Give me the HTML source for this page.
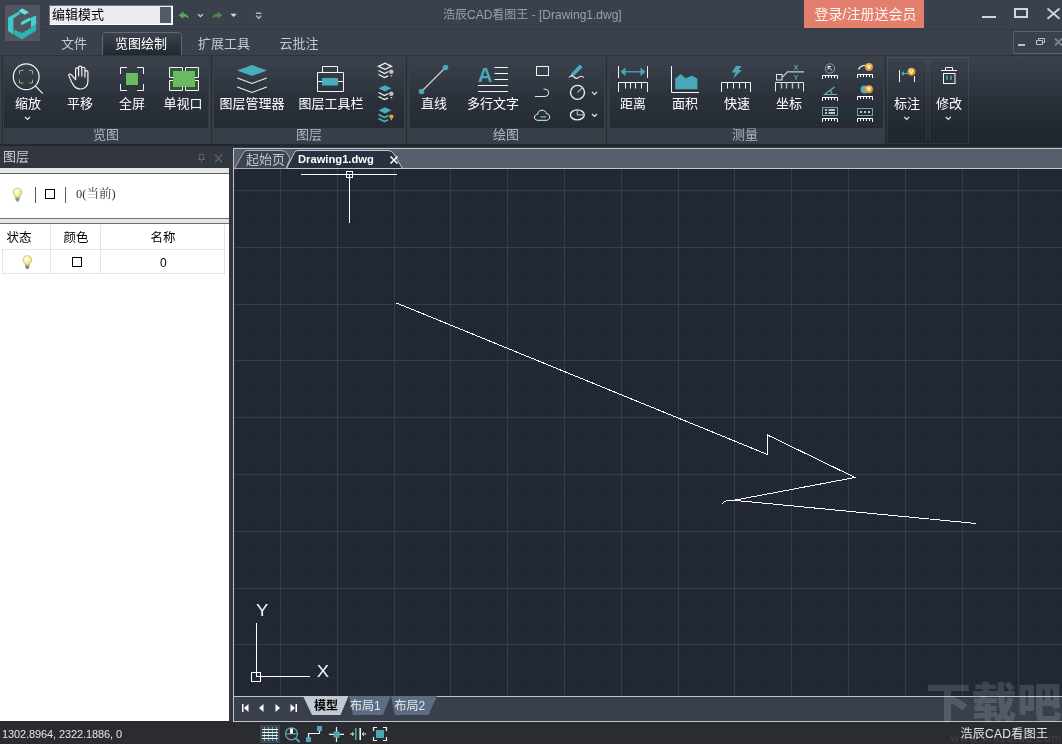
<!DOCTYPE html>
<html lang="zh-CN">
<head>
<meta charset="utf-8">
<title>浩辰CAD看图王 - [Drawing1.dwg]</title>
<style>
html,body{margin:0;padding:0;}
body{width:1062px;height:744px;overflow:hidden;position:relative;background:#3b414c;
 font-family:"Liberation Sans","Noto Sans CJK SC",sans-serif;font-size:13px;color:#fff;}
.a{position:absolute;}
.t{position:absolute;white-space:nowrap;line-height:1;}
svg{position:absolute;overflow:visible;}
.ic{left:0;top:0;width:1062px;height:744px;pointer-events:none;}
/* ribbon */
.grp{position:absolute;top:58px;height:70px;background:linear-gradient(#3c424d 0,#343b45 25%,#2b323b 55%,#242b33 100%);}
.grp2{position:absolute;top:57px;height:87px;box-sizing:border-box;border:1px solid rgba(255,255,255,0.075);}
.sep{position:absolute;top:57px;width:1px;height:87px;background:#262b32;}
.lab{position:absolute;top:128px;height:15px;line-height:14px;font-size:13px;color:#b0b6c0;text-align:center;}
.bl{position:absolute;top:97px;white-space:nowrap;line-height:1;font-size:13px;color:#fff;transform:translateX(-50%);}
.th{position:absolute;top:231.500px;font-size:12.500px;line-height:1;color:#000;transform:translateX(-50%);white-space:nowrap;}
</style>
</head>
<body>
<div id="root" style="position:absolute;left:0;top:0;width:1062px;height:744px;will-change:transform;">

<!-- ===== title bar ===== -->
<div class="a" style="left:0;top:29px;width:1062px;height:1px;background:#353b45;"></div>
<div class="a" style="left:5px;top:5px;width:35px;height:36px;background:#4f5660;"></div>
<div class="a" style="left:49px;top:5px;width:124px;height:20px;background:#ebebf1;box-shadow:inset 1px 1px 0 #70757f, inset -1px -1px 0 #fff;"></div>
<div class="a" style="left:160px;top:7px;width:11px;height:16px;background:#525a6a;"></div>
<div class="t" style="left:52px;top:8px;font-size:13px;color:#000;">编辑模式</div>
<div class="t" style="left:443px;top:9px;font-size:12px;color:#9aa0aa;">浩辰CAD看图王 - [Drawing1.dwg]</div>
<div class="a" style="left:804px;top:0;width:120px;height:28px;background:#e3806d;"></div>
<div class="t" style="left:814.500px;top:7px;font-size:14px;color:#fff4f0;">登录/注册送会员</div>
<div class="a" style="left:1013px;top:31px;width:52px;height:23px;border:1px solid #59606c;border-radius:2px;box-sizing:border-box;"></div>

<!-- ===== menu tabs ===== -->
<div class="a" style="left:103px;top:33px;width:78px;height:23px;border-radius:4px 4px 0 0;background:linear-gradient(#3b424d,#20272f);box-shadow:0 0 0 1px #626975;"></div>
<div class="t" style="left:61px;top:37px;font-size:13px;color:#c6cad2;">文件</div>
<div class="t" style="left:115px;top:37px;font-size:13px;color:#fff;">览图绘制</div>
<div class="t" style="left:198px;top:37px;font-size:13px;color:#c6cad2;">扩展工具</div>
<div class="t" style="left:279.500px;top:37px;font-size:13px;color:#c6cad2;">云批注</div>

<!-- ===== ribbon ===== -->
<div class="a" style="left:0;top:55px;width:1062px;height:1px;background:#2f343c;"></div>
<div class="a" style="left:0;top:56px;width:1062px;height:92px;background:linear-gradient(#3c424d 0,#343b45 20%,#2b323b 45%,#222931 75%,#1e252d 100%);"></div>
<div class="a" style="left:0;top:56px;width:886px;height:88px;background:#383e48;"></div>
<div class="a" style="left:0;top:144px;width:886px;height:2px;background:#23272e;"></div>
<div class="sep" style="left:2px;"></div>
<div class="grp" style="left:4px;width:204px;"></div><div class="lab" style="left:4px;width:204px;">览图</div>
<div class="sep" style="left:211px;"></div>
<div class="grp" style="left:214px;width:190px;"></div><div class="lab" style="left:214px;width:190px;">图层</div>
<div class="sep" style="left:406px;"></div>
<div class="grp" style="left:410px;width:194px;"></div><div class="lab" style="left:408px;width:196px;">绘图</div>
<div class="sep" style="left:606px;"></div>
<div class="grp" style="left:610px;width:273px;"></div><div class="lab" style="left:607px;width:276px;">测量</div>
<div class="sep" style="left:885px;"></div>
<div class="grp2" style="left:887px;width:40px;"></div>
<div class="grp2" style="left:929px;width:40px;"></div>

<div class="bl" style="left:28px;">缩放</div>
<div class="bl" style="left:80px;">平移</div>
<div class="bl" style="left:132px;">全屏</div>
<div class="bl" style="left:183px;">单视口</div>
<div class="bl" style="left:252px;">图层管理器</div>
<div class="bl" style="left:331px;">图层工具栏</div>
<div class="bl" style="left:434px;">直线</div>
<div class="bl" style="left:493px;">多行文字</div>
<div class="bl" style="left:633px;">距离</div>
<div class="bl" style="left:685px;">面积</div>
<div class="bl" style="left:737px;">快速</div>
<div class="bl" style="left:789px;">坐标</div>
<div class="bl" style="left:907px;">标注</div>
<div class="bl" style="left:949px;">修改</div>
<!-- ===== top icons (page coordinates) ===== -->
<svg class="ic" viewBox="0 0 1062 744">
<defs>
 <linearGradient id="lg1" x1="0" y1="0" x2="1" y2="1"><stop offset="0" stop-color="#5fe3e3"/><stop offset="1" stop-color="#27a3a3"/></linearGradient>
 <radialGradient id="gold" cx="0.4" cy="0.35" r="0.7"><stop offset="0" stop-color="#f6c860"/><stop offset="1" stop-color="#d08a20"/></radialGradient>
 <g id="ruler16" fill="none" stroke="#fff" stroke-width="1"><path d="M0.5 4V0.5H15.5V4M3.5 0.5V3M6.5 0.5V3M9.5 0.5V3M12.5 0.5V3"/></g>
 <g id="vbadge"><circle r="4" fill="url(#gold)"/><text x="0" y="2.100" text-anchor="middle" font-family="Liberation Sans, sans-serif" font-size="6" font-weight="bold" fill="#fff">V</text></g>
</defs>
<!-- app logo -->
<g>
 <polygon points="18.5,11.2 22,8.3 29,12.2 24.8,14.8" fill="#62e2e2"/>
 <polygon points="8,17.4 18.6,11.8 20.4,13.4 13.4,18.6 13.4,34.4 8,31" fill="#3fc8cc"/>
 <polygon points="13.8,29.8 22,33 36.2,24.8 36.2,30.4 22,39.6 13.8,34.6" fill="#2fb0b4"/>
 <polygon points="31,17.6 36.2,15.4 36.2,24.6 31,27.4" fill="#45cfd0"/>
 <path d="M22.3 23.2L29.4 19.4" stroke="#4fd6d6" stroke-width="3.2" stroke-linecap="round" fill="none"/>
</g>
<!-- undo / redo -->
<path d="M178.6 15.2L183.4 11.6V13.8C186.6 13.8 188.6 15.8 189 19.2C187.6 17.2 186 16.6 183.4 16.6V18.8Z" fill="#5ea858"/>
<path d="M198 14.2L200.4 16.6L202.8 14.2" fill="none" stroke="#d8dbe0" stroke-width="1.2"/>
<path d="M222.4 15.2L217.6 11.6V13.8C214.4 13.8 212.4 15.8 212 19.2C213.4 17.2 215 16.6 217.6 16.6V18.8Z" fill="#4d8a4c"/>
<path d="M231 14L233.6 16.8L236.2 14Z" fill="#d8dbe0" stroke="#d8dbe0" stroke-width="0.6"/>
<path d="M256 13.2H261.4" stroke="#c8ccd2" stroke-width="1.2"/>
<path d="M256.2 15.6L258.7 18.4L261.2 15.6" fill="none" stroke="#c8ccd2" stroke-width="1.2"/>
<!-- window controls -->
<rect x="982" y="16" width="14" height="2" fill="#d2d5da"/>
<rect x="1015" y="9" width="12" height="8" fill="none" stroke="#d2d5da" stroke-width="2"/>
<path d="M1047.5 8.5L1059.5 18.8M1059.5 8.5L1047.5 18.8" stroke="#d2d5da" stroke-width="1.8" fill="none"/>
<rect x="1018" y="44" width="7" height="2" fill="#c0c4ca"/>
<path d="M1036.5 44.5V40.5H1042.5V44.5ZM1038.5 40V38.5H1044.5V42.5H1043" fill="none" stroke="#c0c4ca" stroke-width="1"/>
<path d="M1055 38.5L1062 45.5M1062 38.5L1055 45.5" stroke="#7d828b" stroke-width="1.8" fill="none"/>

<!-- 缩放 -->
<circle cx="26.2" cy="76.7" r="12.9" fill="none" stroke="#f2f3f5" stroke-width="1.2"/>
<path d="M35.6 86.2L42.8 93.6" stroke="#f2f3f5" stroke-width="1.2"/>
<path d="M19.5 74V70.5H23.5M29 70.5H32.5V74M32.5 79.5V83H29M23.5 83H19.5V79.5" fill="none" stroke="#86b87a" stroke-width="1"/>
<path d="M25 117L27.5 119.5L30 117" fill="none" stroke="#e6e8ec" stroke-width="1.2"/>
<!-- 平移 hand -->
<path d="M68.800 75.600C68.300 74.200 70.200 73.400 71.200 74.600L75.600 79.600V69.200C75.600 67.400 78.600 67.400 78.600 69.200V76V67.400C78.600 65.600 81.800 65.600 81.800 67.400V76V68.600C81.800 66.800 84.900 66.800 84.900 68.600V77V72C84.900 70.200 87.900 70.200 87.900 72V81.500C87.900 86 84.800 89 80.600 89C77 89 75.200 87.800 73.600 85.400C72 83 70 78.600 68.800 75.600Z" fill="none" stroke="#f2f3f5" stroke-width="1.2" stroke-linejoin="round"/>
<!-- 全屏 -->
<path d="M120.500 74V67.500H127M137 67.500H143.500V74M143.500 84V90.500H137M127 90.500H120.500V84" fill="none" stroke="#f4f5f6" stroke-width="1"/>
<rect x="126" y="73" width="12" height="12" fill="#6cba60"/>
<!-- 单视口 -->
<path d="M169.500 67.500H182.500V77.500H169.500ZM185.500 67.500H198.500V77.500H185.500ZM169.500 80.500H182.500V90.500H169.500ZM185.500 80.500H198.500V90.500H185.500Z" fill="#32573a" stroke="#f4f5f6" stroke-width="1"/>
<rect x="173" y="71" width="22" height="16" fill="#6cba60"/>
<!-- 图层管理器 -->
<polygon points="237,70.500 252,65 267,70.500 252,76" fill="#49adc0"/>
<path d="M237.300 78L252 83.500L266.700 78M237.300 87L252 92.500L266.700 87" fill="none" stroke="#f2f3f5" stroke-width="1.1"/>
<!-- 图层工具栏 -->
<path d="M317.500 72.500H343.500V91.500H317.500ZM322.500 72.500V66.500H337.500V72.500M317.500 81.500H322M338 81.500H343.500" fill="none" stroke="#f4f5f6" stroke-width="1"/>
<rect x="322" y="78" width="16" height="7.500" fill="#49adc0"/>
<!-- small layer icons -->
<g fill="none" stroke-width="1.300">
 <path d="M378.500 66.300L385 63.200L391.500 66.300L385 69.400Z" stroke="#f2f3f5"/>
 <path d="M378.500 70.500L384.500 73.500L388.500 71.500M378.500 74.500L384.500 77.500L388 75.800" stroke="#f2f3f5"/>
 <path d="M378.500 92.500L384.500 95.500L388.500 93.500M378.500 96.500L384.500 99.500L388 97.800" stroke="#f2f3f5"/>
 <path d="M378.500 114.500L384.500 117.500L388.500 115.500M378.500 118.500L384.500 121.500L388 119.800" stroke="#49adc0" stroke-width="1.6"/>
</g>
<polygon points="378.500,88.300 385,85.200 391.500,88.300 385,91.400" fill="#49adc0"/>
<polygon points="378.500,110.300 385,107.200 391.500,110.300 385,113.400" fill="#49adc0"/>
<circle cx="391.300" cy="71.800" r="2.200" fill="#c4c4cc"/><path d="M390 75H392.600L391.300 77Z" fill="#a8a8b0"/>
<circle cx="391.300" cy="93.800" r="2.200" fill="#c4c4cc"/><path d="M390 97H392.600L391.300 99Z" fill="#a8a8b0"/>
<circle cx="391.300" cy="116.600" r="2.200" fill="#f0a030"/><rect x="390.600" y="118.800" width="1.400" height="1.400" fill="#e89828"/>

<!-- 直线 -->
<path d="M421.500 91.500L445.500 67.500" stroke="#c9cdd4" stroke-width="1.2"/>
<circle cx="421.500" cy="91.500" r="2.800" fill="#4aa8b6"/><circle cx="445.500" cy="67.500" r="2.800" fill="#4aa8b6"/>
<!-- 多行文字 -->
<text x="477.800" y="81.800" font-family="Liberation Sans, sans-serif" font-size="20.500" font-weight="bold" fill="#4aa8b6">A</text>
<path d="M494.500 67.500H508M494.500 73.500H508M494.500 79.500H508M478 85.500H508M478 91.500H508" stroke="#f4f5f6" stroke-width="1"/>
<!-- small draw icons -->
<rect x="536.500" y="66.500" width="12" height="9" fill="none" stroke="#f2f3f5" stroke-width="1"/>
<path d="M535 96.500H545A3.700 3.700 0 0 0 545 89.100H543.500" fill="none" stroke="#e2e4e8" stroke-width="1"/>
<path d="M538 120.300C535.500 120.300 534.300 118.600 534.500 117C534.700 115.400 536 114.400 537.600 114.500C537.800 111.800 539.800 110.200 542 110.200C544.200 110.200 546 111.600 546.500 113.800C548.500 113.800 549.700 115.200 549.700 117C549.700 118.800 548.500 120.300 546.500 120.300Z" fill="none" stroke="#f2f3f5" stroke-width="1"/>
<path d="M540.500 116.800H546" stroke="#49adc0" stroke-width="1.600"/>
<path d="M571.200 73.600L579.800 64.600L582.600 67.200L573.800 76Z" fill="#49adc0"/>
<path d="M570.600 76.600L571.400 74L573.200 75.600Z" fill="#e8eaee"/>
<path d="M569 77.400C570.500 75.600 572.600 75.600 574 77C575.600 78.600 577.600 78.600 579 77.200C580.400 76 582.400 76.200 583.800 77.600" fill="none" stroke="#e8eaee" stroke-width="1.100"/>
<circle cx="577.500" cy="92.400" r="7" fill="none" stroke="#eceef1" stroke-width="1.400"/>
<path d="M577.500 92.400L583 87.300" stroke="#9fc4cc" stroke-width="1.200"/>
<path d="M592 91.800L594.500 94.300L597 91.800" fill="none" stroke="#e6e8ec" stroke-width="1.200"/>
<ellipse cx="577.300" cy="114.900" rx="6.900" ry="5" fill="none" stroke="#eceef1" stroke-width="1.400"/>
<path d="M577.300 110V114.900H584" fill="none" stroke="#8fc0c8" stroke-width="1.200"/>
<path d="M592 114L594.500 116.500L597 114" fill="none" stroke="#e6e8ec" stroke-width="1.200"/>
<!-- 距离 -->
<path d="M618.500 66V78M647.500 66V78" stroke="#f4f5f6" stroke-width="1"/>
<path d="M624 71.800H642" stroke="#4aa8b6" stroke-width="1.300"/>
<path d="M620.500 71.800L625.500 67.500V76.100ZM645.500 71.800L640.500 67.500V76.100Z" fill="#4aa8b6"/>
<path d="M618.500 92V82.500H647.500V92M625.500 82.500V88.500M630.500 82.500V88.500M635.500 82.500V88.500M641.500 82.500V88.500" fill="none" stroke="#f4f5f6" stroke-width="1"/>
<!-- 面积 -->
<path d="M671.500 66V92.500H699" fill="none" stroke="#f4f5f6" stroke-width="1"/>
<polygon points="675.200,89.200 675.200,78.700 680.500,74 685.800,78.200 692,75.500 697.400,78.700 697.400,89.200" fill="#4aa8b6"/>
<!-- 快速 -->
<path d="M721.500 92V82.500H750.500V92M727.500 82.500V88.500M733.500 82.500V88.500M739.500 82.500V88.500M745.500 82.500V88.500" fill="none" stroke="#f4f5f6" stroke-width="1"/>
<polygon points="736,66 741.500,66 738.600,70 742,70 733,78.700 735.600,72.500 731.600,72.500" fill="#4aa8b6"/>
<!-- 坐标 -->
<path d="M775.500 91.500V82.500H803.500V91.500" fill="none" stroke="#e4e6ea" stroke-width="1"/>
<path d="M781.500 82.500V88.500M786.500 82.500V88.500M792.500 82.500V88.500M798.500 82.500V88.500" fill="none" stroke="#b9bdc4" stroke-width="1.400"/>
<rect x="776.500" y="74.500" width="5.500" height="5.500" fill="none" stroke="#e4e6ea" stroke-width="1"/>
<path d="M782.500 77L787.500 71.800H804" fill="none" stroke="#c4c7cd" stroke-width="1.200"/>
<text x="796.200" y="69.600" text-anchor="middle" font-family="Liberation Sans, sans-serif" font-size="7" font-weight="bold" fill="#4aa8b6">X</text>
<text x="796.200" y="80.400" text-anchor="middle" font-family="Liberation Sans, sans-serif" font-size="7" font-weight="bold" fill="#4aa8b6">Y</text>
<!-- small measure icons col 1 -->
<use href="#ruler16" x="822" y="75"/>
<circle cx="830" cy="68.500" r="4.700" fill="none" stroke="#5fa8b4" stroke-width="1"/>
<path d="M832 70.500L828 66.500M828 69.500V66.500H831" fill="none" stroke="#f2f3f5" stroke-width="1"/>
<use href="#ruler16" x="822" y="97"/>
<path d="M834.500 87L824.500 94.500H837M830 90.300C831.500 91.500 832 93 832 94.500" fill="none" stroke="#6fb0bc" stroke-width="1.100"/>
<use href="#ruler16" x="822" y="118"/>
<rect x="822.500" y="107.500" width="15" height="8" fill="none" stroke="#5fa8b4" stroke-width="1"/>
<path d="M825 110H827M825 113H827M828.500 110H835M828.500 113H835" stroke="#f2f3f5" stroke-width="1.300"/>
<!-- small measure icons col 2 -->
<use href="#ruler16" x="857" y="74"/>
<path d="M858.500 69.500C859.500 67 862 65.500 865 65.300" fill="none" stroke="#f2f3f5" stroke-width="1.200"/>
<use href="#vbadge" x="869" y="67"/>
<use href="#ruler16" x="857" y="96"/>
<circle cx="864.500" cy="89.500" r="4" fill="#5fa8b4"/>
<use href="#vbadge" x="869" y="89.300"/>
<use href="#ruler16" x="857" y="118"/>
<rect x="857.500" y="108.500" width="15" height="7" fill="none" stroke="#5fa8b4" stroke-width="1"/>
<path d="M860 112H862M864 112H866M868 112H870" stroke="#f2f3f5" stroke-width="1.600"/>
<!-- 标注 -->
<path d="M899.500 70V82M914.500 76V82" stroke="#f2f3f5" stroke-width="1"/>
<path d="M903 73.500H908" stroke="#4aa8b6" stroke-width="1.200"/><path d="M900.800 73.500L904 71V76Z" fill="#4aa8b6"/>
<use href="#vbadge" x="911.500" y="71.700"/>
<path d="M904.200 117L906.700 119.500L909.200 117" fill="none" stroke="#e6e8ec" stroke-width="1.200"/>
<!-- 修改 -->
<path d="M941 70.500H957M945.500 70.500V67.500H952.500V70.500" fill="none" stroke="#f4f5f6" stroke-width="1"/>
<rect x="943.500" y="73.500" width="11.500" height="10" fill="none" stroke="#f4f5f6" stroke-width="1"/>
<path d="M947 75.500V80M951 75.500V80" stroke="#4aa8b6" stroke-width="1.500"/>
<path d="M945.800 117L948.300 119.500L950.800 117" fill="none" stroke="#e6e8ec" stroke-width="1.200"/>
</svg>

<!-- ===== left panel ===== -->
<div class="a" style="left:0;top:146px;width:234px;height:22px;background:#31363f;"></div>
<div class="t" style="left:3px;top:150px;font-size:13px;color:#c9cdd4;">图层</div>
<div class="a" style="left:0;top:168px;width:229px;height:553px;background:#fff;"></div>
<div class="a" style="left:0;top:168px;width:229px;height:5px;background:#e6e6ea;"></div>
<div class="a" style="left:0;top:173px;width:229px;height:1px;background:#5c5f66;"></div>
<div class="a" style="left:0;top:218px;width:229px;height:1px;background:#6c6f76;"></div>
<div class="a" style="left:0;top:219px;width:229px;height:4px;background:#e6e6ea;"></div>
<div class="a" style="left:0;top:223px;width:229px;height:1px;background:#6c6f76;"></div>
<div class="a" style="left:35px;top:187px;width:1px;height:16px;background:#555;"></div>
<div class="a" style="left:65px;top:187px;width:1px;height:16px;background:#555;"></div>
<div class="a" style="left:45px;top:189px;width:10px;height:10px;box-sizing:border-box;border:1px solid #000;background:#fff;"></div>
<div class="t" style="left:76px;top:188px;font-size:12.500px;color:#333;font-family:'Liberation Serif','Noto Serif CJK SC',serif;">0(当前)</div>
<!-- table -->
<div class="a" style="left:2px;top:249px;width:223px;height:1px;background:#e3e3e3;"></div>
<div class="a" style="left:2px;top:273px;width:223px;height:1px;background:#e3e3e3;"></div>
<div class="a" style="left:2px;top:249px;width:1px;height:25px;background:#e3e3e3;"></div>
<div class="a" style="left:50px;top:225px;width:1px;height:49px;background:#e3e3e3;"></div>
<div class="a" style="left:100px;top:225px;width:1px;height:49px;background:#e3e3e3;"></div>
<div class="a" style="left:224px;top:225px;width:1px;height:49px;background:#e3e3e3;"></div>
<div class="th" style="left:19px;">状态</div>
<div class="th" style="left:76px;">颜色</div>
<div class="th" style="left:163px;">名称</div>
<div class="a" style="left:72px;top:257px;width:10px;height:10px;box-sizing:border-box;border:1px solid #000;background:#fff;"></div>
<div class="t" style="left:160px;top:257px;font-size:12px;color:#000;">0</div>

<!-- ===== drawing area ===== -->
<div class="a" style="left:229px;top:147px;width:833px;height:575px;background:#3a404b;"></div>
<div class="a" style="left:229px;top:147px;width:4px;height:575px;background:#31363f;"></div>
<div class="a" style="left:233px;top:148px;width:829px;height:574px;background:#c0c4cc;"></div>
<div class="a" style="left:234px;top:149px;width:828px;height:19px;background:#555f6e;"></div>
<div class="a" style="left:234px;top:697px;width:828px;height:24px;background:#3a404b;"></div>
<svg class="a" style="left:234px;top:169px;width:828px;height:527px;background:#212834;" viewBox="0 0 828 527" shape-rendering="crispEdges">
<path d="M1.5 0V527M12.5 0V527M23.5 0V527M35.5 0V527M57.5 0V527M69.5 0V527M80.5 0V527M91.5 0V527M114.5 0V527M126.5 0V527M137.5 0V527M148.5 0V527M171.5 0V527M182.5 0V527M194.5 0V527M205.5 0V527M228.5 0V527M239.5 0V527M250.5 0V527M262.5 0V527M285.5 0V527M296.5 0V527M307.5 0V527M319.5 0V527M341.5 0V527M353.5 0V527M364.5 0V527M375.5 0V527M398.5 0V527M410.5 0V527M421.5 0V527M432.5 0V527M455.5 0V527M466.5 0V527M478.5 0V527M489.5 0V527M512.5 0V527M523.5 0V527M534.5 0V527M546.5 0V527M569.5 0V527M580.5 0V527M591.5 0V527M603.5 0V527M625.5 0V527M637.5 0V527M648.5 0V527M659.5 0V527M682.5 0V527M694.5 0V527M705.5 0V527M716.5 0V527M739.5 0V527M750.5 0V527M762.5 0V527M773.5 0V527M796.5 0V527M807.5 0V527M818.5 0V527M0 10.5H828M0 32.5H828M0 44.5H828M0 55.5H828M0 66.5H828M0 89.5H828M0 100.5H828M0 112.5H828M0 123.5H828M0 146.5H828M0 157.5H828M0 169.5H828M0 180.5H828M0 203.5H828M0 214.5H828M0 225.5H828M0 237.5H828M0 259.5H828M0 271.5H828M0 282.5H828M0 294.5H828M0 316.5H828M0 328.5H828M0 339.5H828M0 350.5H828M0 373.5H828M0 384.5H828M0 396.5H828M0 407.5H828M0 430.5H828M0 441.5H828M0 453.5H828M0 464.5H828M0 487.5H828M0 498.5H828M0 509.5H828M0 521.5H828" stroke="#252c38" stroke-width="1" fill="none"/>
<path d="M46.5 0V527M103.5 0V527M160.5 0V527M216.5 0V527M273.5 0V527M330.5 0V527M387.5 0V527M444.5 0V527M500.5 0V527M557.5 0V527M614.5 0V527M671.5 0V527M728.5 0V527M784.5 0V527M0 21.5H828M0 78.5H828M0 135.5H828M0 191.5H828M0 248.5H828M0 305.5H828M0 362.5H828M0 419.5H828M0 475.5H828" stroke="#343c4f" stroke-width="1" fill="none"/>
</svg>
<svg class="ic" viewBox="0 0 1062 744">
<defs>
 <radialGradient id="bulb" cx="0.4" cy="0.35" r="0.7"><stop offset="0" stop-color="#ffffee"/><stop offset="0.55" stop-color="#f6f096"/><stop offset="1" stop-color="#d9cc5c"/></radialGradient>
 <g id="bulbic"><path d="M0 -7C-3.300 -7 -5 -4.600 -5 -2.400C-5 -0.400 -3.600 0.800 -2.600 2.400V4H2.600V2.400C3.600 0.800 5 -0.400 5 -2.400C5 -4.600 3.300 -7 0 -7Z" fill="url(#bulb)" stroke="#a8a068" stroke-width="0.600"/><rect x="-2.300" y="4" width="4.600" height="3" fill="#8d9096"/><rect x="-1.300" y="7" width="2.600" height="1" fill="#55585e"/></g>
</defs>
<!-- panel header pin / close -->
<path d="M199.500 154.500V159.500M203.500 154.500V159.500M199.500 154.500H203.500M198 159.500H205M201.500 159.500V163" fill="none" stroke="#5b616c" stroke-width="1"/>
<path d="M215 154.500L222 162.500M222 154.500L215 162.500" stroke="#5b616c" stroke-width="1.200"/>
<use href="#bulbic" transform="translate(17.500 194.300) scale(0.88)"/>
<use href="#bulbic" transform="translate(27.300 261.800) scale(0.88)"/>
<!-- doc tabs -->
<path d="M234.500 168.500L243.500 152.500Q244.500 150.500 247 150.500H281Q285.500 150.500 287.500 154L290 158.500L286 168.500Z" fill="#3b4350" stroke="#a7acb5" stroke-width="1"/>
<path d="M286.500 168.500L294.500 152.500Q295.500 150.500 298 150.500H388Q392 150.500 394 154L402.500 168.500Z" fill="#263241" stroke="#c4c8cf" stroke-width="1"/>
<path d="M390.500 156.500L397.500 163.500M397.500 156.500L390.500 163.500" stroke="#fff" stroke-width="1.600"/>
<path d="M1053.500 156.500H1060.500L1057 160.500Z" fill="#5b5d68"/>
<!-- drawing -->
<g shape-rendering="crispEdges" stroke="#fff" stroke-width="1" fill="none">
 <path d="M301 174.500H397M349.500 174V223"/>
 <rect x="346.500" y="171.500" width="6" height="6"/>
 <path d="M256.500 623V677M256 676.500H310"/>
 <rect x="251.500" y="672.500" width="9" height="9"/>
 <path d="M396.500 303L767.500 454.500V435L855 477.500L734 500.300L976.500 523.500"/>
 <path d="M722 503.500L726 500.800L734 500.300"/>
</g>
<text x="256" y="616" textLength="12.400" lengthAdjust="spacingAndGlyphs" font-family="Liberation Sans, sans-serif" font-size="16.500" fill="#f4f5f7">Y</text>
<text x="316.800" y="677" textLength="12.400" lengthAdjust="spacingAndGlyphs" font-family="Liberation Sans, sans-serif" font-size="16.500" fill="#f4f5f7">X</text>
<!-- layout tabs -->
<polygon points="303,696 349,696 341,715 312,715" fill="#c3c9d3"/>
<polygon points="349,696 391,696 383.500,715 353,715" fill="#5d6c82"/>
<polygon points="391,696 437,696 428.500,715 395,715" fill="#5d6c82"/>
<path d="M349 696L341 715M391 696L383.500 715" stroke="#3a404b" stroke-width="1" fill="none"/>
<!-- nav arrows -->
<g fill="#fff">
 <rect x="242" y="704" width="1.500" height="8"/><polygon points="248.500,704 248.500,712 244,708"/>
 <polygon points="263.500,704 263.500,712 259,708"/>
 <polygon points="275.500,704 275.500,712 280,708"/>
 <polygon points="290.500,704 290.500,712 295,708"/><rect x="295.500" y="704" width="1.500" height="8"/>
</g>
<!-- status icons -->
<rect x="260" y="725" width="20" height="18" fill="#3b4751"/>
<path d="M264.500 727V741M268.500 727V741M272.500 727V741M276.500 727V741" stroke="#5ab0c0" stroke-width="1"/>
<path d="M262 729.500H278M262 732.500H278M262 735.500H278M262 738.500H278" stroke="#f2f3f5" stroke-width="1"/>
<circle cx="291.500" cy="733.800" r="6" fill="none" stroke="#58a8b6" stroke-width="1.300"/>
<path d="M285.500 733.800H297.500" stroke="#58a8b6" stroke-width="1.200"/>
<rect x="290" y="728.500" width="3" height="5" fill="#f2f3f5"/>
<path d="M295.800 738.300L299.500 742" stroke="#58a8b6" stroke-width="1.800"/>
<rect x="317" y="726" width="5" height="5" fill="#4aa8b6"/><rect x="306" y="737" width="5" height="5" fill="#4aa8b6"/>
<path d="M308.500 737V733.500H319.500V731" fill="none" stroke="#f2f3f5" stroke-width="1.200"/>
<path d="M329 734.300H344M336.500 727V742" stroke="#f2f3f5" stroke-width="1.200"/>
<rect x="333.500" y="731.500" width="6" height="6" fill="#4aa8b6"/>
<path d="M355.800 728V740" stroke="#4aa8b6" stroke-width="1.600"/><path d="M360.200 728V740" stroke="#f2f3f5" stroke-width="1.600"/>
<path d="M350 734H353.500M352 732.300L353.800 734L352 735.700M366 734H362.500M364 732.300L362.200 734L364 735.700" fill="none" stroke="#f2f3f5" stroke-width="1"/>
<path d="M373.500 731V727.500H377M383 727.500H386.500V731M386.500 737V740.500H383M377 740.500H373.500V737" fill="none" stroke="#f2f3f5" stroke-width="1.200"/>
<rect x="376" y="730" width="8" height="8" fill="#4aa8b6"/>
</svg>
<div class="t" style="left:246px;top:153px;font-size:13px;color:#c0c4cc;">起始页</div>
<div class="t" style="left:298px;top:154px;font-size:11.2px;font-weight:bold;color:#fff;font-family:'Liberation Sans',sans-serif;">Drawing1.dwg</div>
<div class="t" style="left:314px;top:700px;font-size:12px;font-weight:bold;color:#000;">模型</div>
<div class="t" style="left:350px;top:700px;font-size:12px;color:#e2e8f0;">布局1</div>
<div class="t" style="left:394.500px;top:700px;font-size:12px;color:#e2e8f0;">布局2</div>

<!-- ===== status bar ===== -->
<div class="a" style="left:0;top:721px;width:1062px;height:23px;background:#2a2c30;z-index:-1;"></div>
<div class="t" style="left:2px;top:728.500px;font-size:11px;letter-spacing:-0.100px;color:#e4e6ea;">1302.8964, 2322.1886, 0</div>
<div class="t" style="left:960.500px;top:728px;font-size:12px;letter-spacing:0.300px;color:#e4e6ea;">浩辰CAD看图王</div>
<!-- watermark -->
<div class="t" style="left:926px;top:683px;font-size:42px;font-weight:900;letter-spacing:0.500px;transform:scaleX(1.07);transform-origin:0 0;color:rgba(255,255,255,0.14);font-family:'Liberation Sans','Noto Sans CJK SC',sans-serif;">下载吧</div>
<div class="t" style="left:951px;top:733px;font-size:11px;color:rgba(255,255,255,0.10);letter-spacing:1.300px;">www.xiazaiba.com</div>
</div>
</body>
</html>
